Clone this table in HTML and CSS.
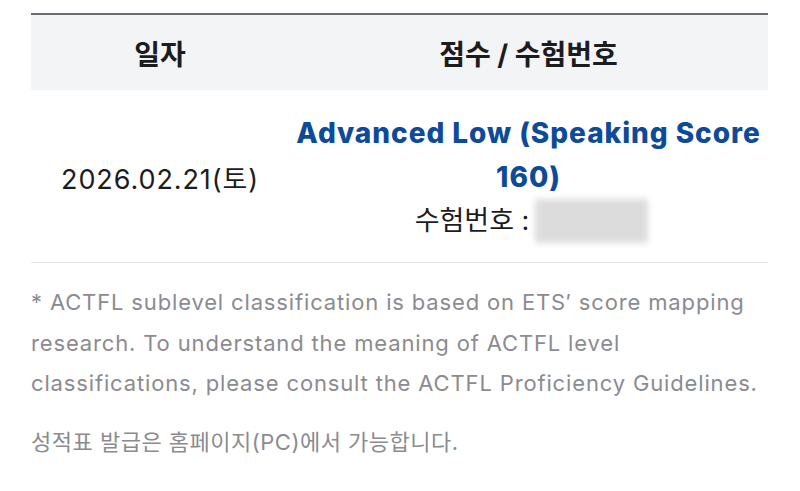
FILE: index.html
```html
<!DOCTYPE html>
<html lang="ko">
<head>
<meta charset="utf-8">
<link rel="stylesheet" href="styles.css">
</head>
<body>
<div class="page">
  <table class="score-table">
    <thead>
      <tr>
        <th class="col-date">일자</th>
        <th class="col-score">점수 / 수험번호</th>
      </tr>
    </thead>
    <tbody>
      <tr>
        <td class="date">2026.02.21(토)</td>
        <td class="score">
          <div class="level">Advanced Low (Speaking Score 160)</div>
          <div class="exam-no">수험번호 : <span class="masked"></span></div>
        </td>
      </tr>
    </tbody>
  </table>
  <p class="note">* ACTFL sublevel classification is based on ETS′ score mapping research. To understand the meaning of ACTFL level classifications, please consult the ACTFL Proficiency Guidelines.</p>
  <p class="notice">성적표 발급은 홈페이지(PC)에서 가능합니다.</p>
</div>
</body>
</html>
```

FILE: styles.css
```css
* { box-sizing: border-box; }
html, body { margin: 0; padding: 0; background: #ffffff; }
body {
  font-family: Inter, "Noto Sans CJK KR", sans-serif;
  color: #1c1c1e;
}
.page {
  padding: 13px 32px 0 31px;
}
.score-table {
  width: 100%;
  border-collapse: collapse;
  border-top: 2px solid #6b6e75;
}
.score-table th {
  background: #f3f4f6;
  height: 76px;
  font-size: 28px;
  font-weight: 700;
  color: #1c1c1e;
  text-align: center;
  padding: 0;
}
.col-date { width: 258px; }
.score-table td {
  text-align: center;
  border-bottom: 1px solid #e6e6e8;
  padding: 21px 0 19px;
}
.date {
  font-size: 27px;
  letter-spacing: 0.9px;
  color: #1c1c1e;
}
.level {
  font-size: 28px;
  font-weight: 800;
  letter-spacing: 0.95px;
  color: #0e4a9a;
  line-height: 44px;
  padding: 0;
}
.exam-no {
  font-size: 27px;
  line-height: 44px;
  display: flex;
  justify-content: center;
  align-items: center;
  gap: 6px;
  padding-left: 6px;
}
.masked {
  display: inline-block;
  width: 113px;
  height: 44px;
  background: #dcdcdc;
  filter: blur(3px);
}
.note {
  margin: 19px 0 0;
  font-size: 22px;
  letter-spacing: 0.85px;
  line-height: 40.5px;
  color: #8b8b90;
}
.notice {
  margin: 18px 0 0;
  font-size: 22px;
  letter-spacing: 0.5px;
  line-height: 40px;
  color: #8b8b90;
}
```
